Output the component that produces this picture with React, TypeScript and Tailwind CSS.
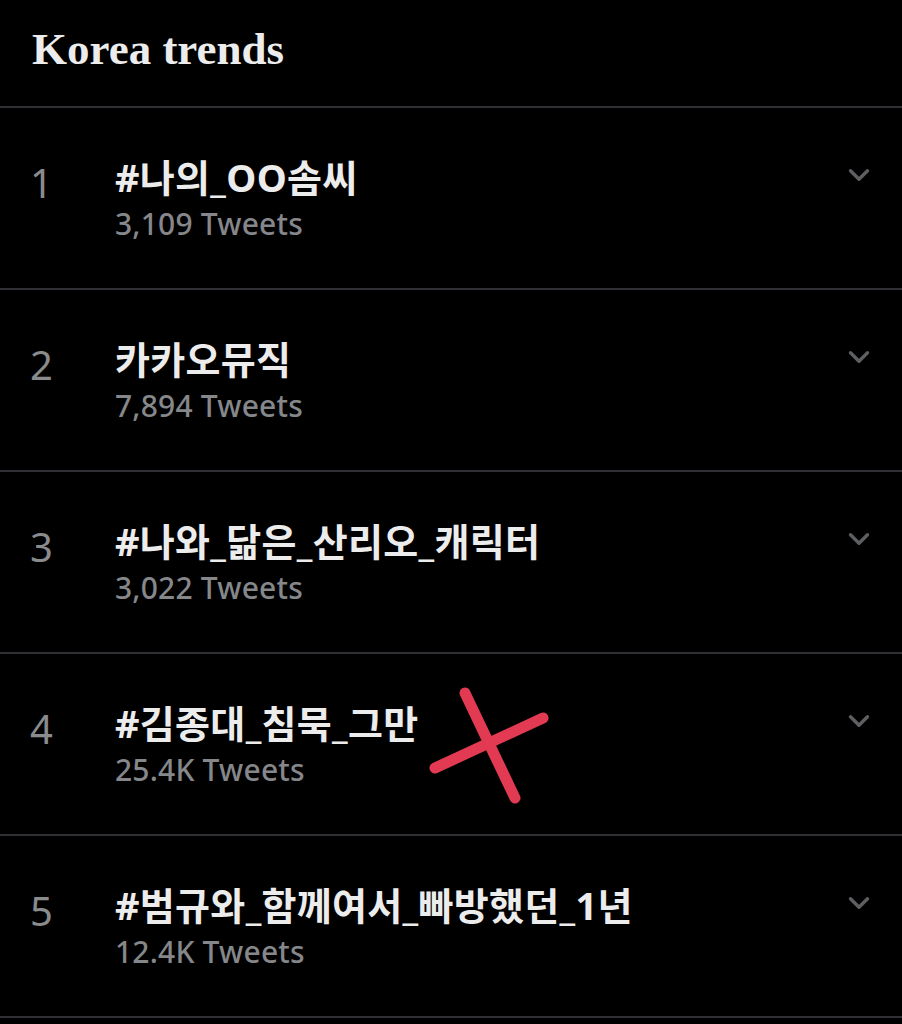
import { ChevronDown } from "lucide-react";

type Trend = {
  rank: number;
  title: string;
  count: string;
};

const trends: Trend[] = [
  { rank: 1, title: "#나의_OO솜씨", count: "3,109 Tweets" },
  { rank: 2, title: "카카오뮤직", count: "7,894 Tweets" },
  { rank: 3, title: "#나와_닮은_산리오_캐릭터", count: "3,022 Tweets" },
  { rank: 4, title: "#김종대_침묵_그만", count: "25.4K Tweets" },
  { rank: 5, title: "#범규와_함께여서_빠방했던_1년", count: "12.4K Tweets" }
];

function TrendRow({ trend }: { trend: Trend }) {
  return (
    <div className="flex h-[182px] border-b-2 border-[#2f3033]">
      <div className="w-[115px] pl-[30px] pt-[55px] text-[40px] leading-none text-[#8a8b8d]">
        {trend.rank}
      </div>
      <div className="flex-1 pt-[47px]">
        <p className="text-[38px] font-bold leading-[44px] tracking-[0.3px] text-[#ececec]">{trend.title}</p>
        <p className="mt-[8px] text-[30px] font-medium leading-[34px] tracking-[0.2px] text-[#85878a]">
          {trend.count}
        </p>
      </div>
      <div className="pr-[26px] pt-[50px]">
        <ChevronDown aria-hidden className="h-[34px] w-[34px] text-[#5e5f62]" strokeWidth={2.4} />
      </div>
    </div>
  );
}

export default function App() {
  return (
    <div
      className="relative min-h-[1024px] w-[902px] overflow-hidden bg-black"
      style={{ fontFamily: '"Noto Sans", "Noto Sans CJK KR", sans-serif' }}
    >
      <div className="h-[108px] border-b-2 border-[#2f3033] pl-[32px] pt-[20px]">
        <h1
          className="text-[45px] font-bold leading-[58px] text-[#ececec]"
          style={{ fontFamily: '"Liberation Serif", serif' }}
        >
          Korea trends
        </h1>
      </div>
      {trends.map((trend) => (
        <TrendRow key={trend.rank} trend={trend} />
      ))}
      <svg
        aria-hidden
        className="absolute left-[420px] top-[680px]"
        width="140"
        height="130"
        viewBox="0 0 140 130"
      >
        <g stroke="#e23a52" strokeWidth="11" strokeLinecap="round">
          <line x1="45" y1="13" x2="95" y2="118" />
          <line x1="123" y1="38" x2="15" y2="88" />
        </g>
      </svg>
    </div>
  );
}
